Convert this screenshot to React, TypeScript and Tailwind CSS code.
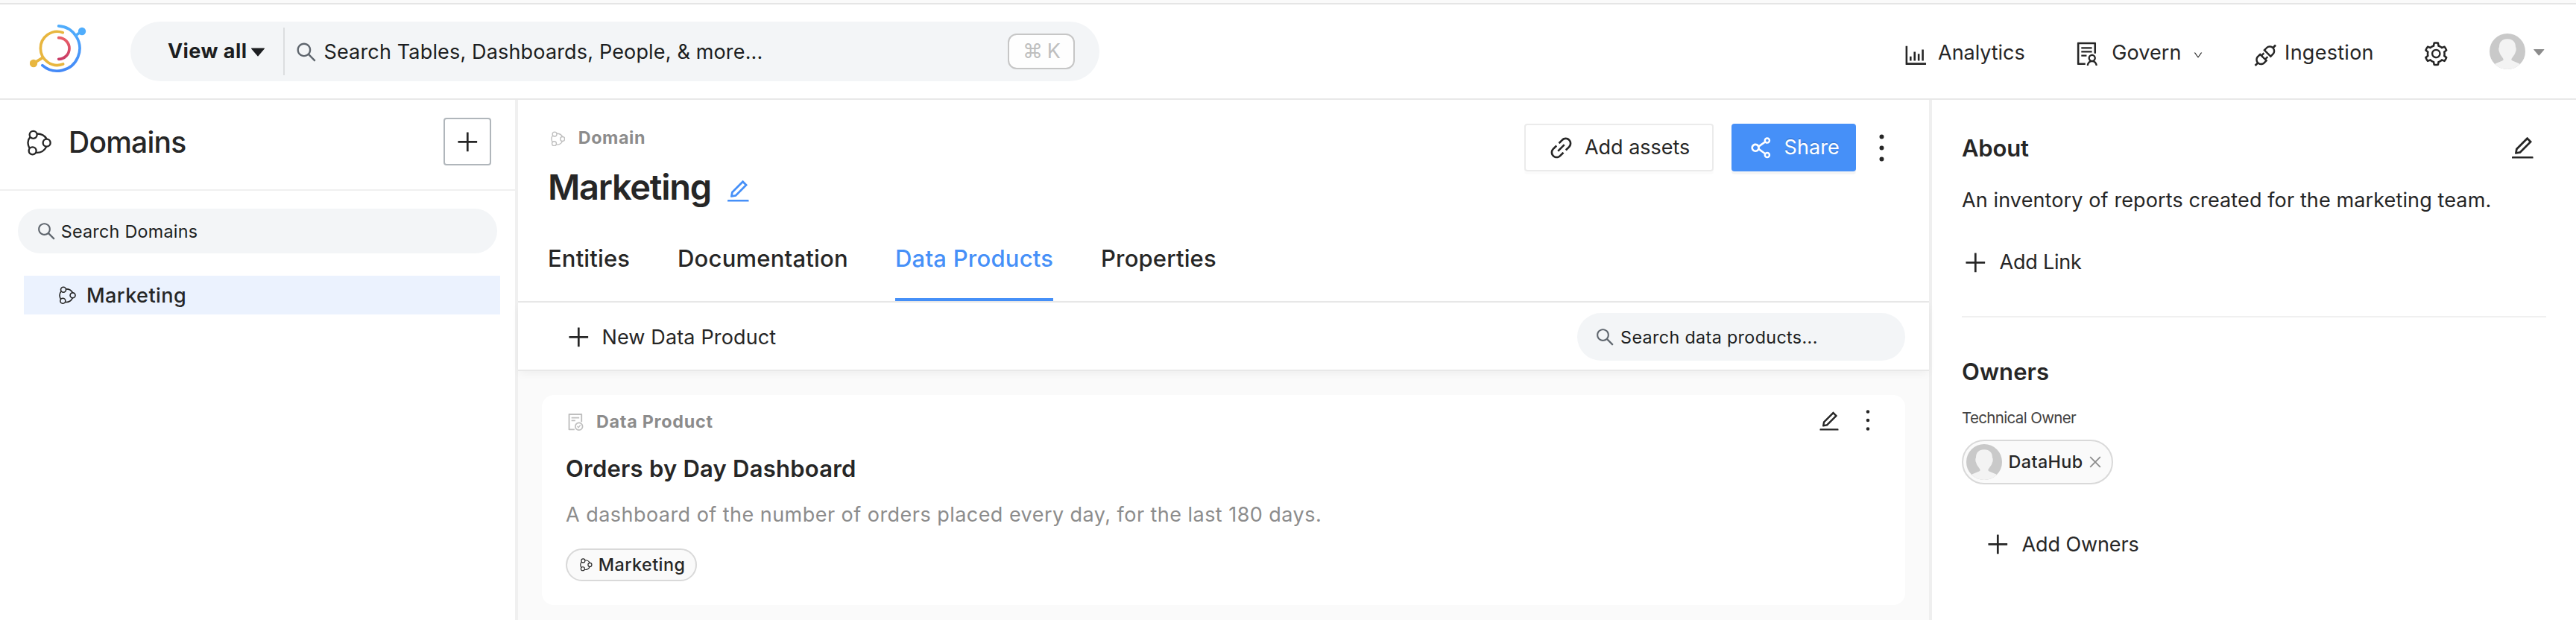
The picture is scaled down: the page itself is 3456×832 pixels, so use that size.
import React from "react";
import {
  AiFillCaretDown,
  AiOutlineApi,
  AiOutlineBarChart,
  AiOutlineClose,
  AiOutlineDown,
  AiOutlineEdit,
  AiOutlineFileDone,
  AiOutlineLink,
  AiOutlineMore,
  AiOutlinePlus,
  AiOutlineSearch,
  AiOutlineSetting,
  AiOutlineShareAlt,
  AiOutlineSolution,
} from "react-icons/ai";

function Logo() {
  return (
    <svg viewBox="60 36 228 198" className="h-[66px] w-[76px] shrink-0" fill="none" strokeWidth="11" strokeLinecap="round">
      <defs>
        <linearGradient id="logo-blue" x1="0" y1="0" x2="0" y2="1">
          <stop offset="0" stopColor="#50adfc" />
          <stop offset="1" stopColor="#4489f7" />
        </linearGradient>
        <linearGradient id="logo-red" x1="0" y1="0" x2="0" y2="1">
          <stop offset="0" stopColor="#ea6068" />
          <stop offset="1" stopColor="#c93c66" />
        </linearGradient>
      </defs>
      <path d="M176 44.6A90.5 90.5 0 1 1 110.5 203" stroke="url(#logo-blue)" />
      <path d="M247 81L268 67" stroke="#50adfc" />
      <circle cx="270" cy="66" r="15.5" fill="#50adfc" />
      <path d="M193 71A67.5 67.5 0 1 0 194 198M78 193L112 172" stroke="#e8b63f" />
      <circle cx="75" cy="195" r="15.5" fill="#e8b63f" />
      <path d="M176 92A43 43 0 0 1 176 178" stroke="url(#logo-red)" />
    </svg>
  );
}

function DomainIcon({ className }: { className: string }) {
  return (
    <svg viewBox="47 463 100 105" className={className} fill="none" stroke="currentColor" strokeWidth="7">
      <circle cx="73" cy="483.5" r="15" />
      <circle cx="127" cy="516" r="15" />
      <circle cx="70" cy="548" r="15" />
      <path d="M88 479.5C105 479 119 487 127 500.5M85 555.5C103 557 119 547 126 531.5M60 493C50 505 49 521 57.5 537.5" />
    </svg>
  );
}

function Avatar() {
  return (
    <svg viewBox="0 0 144 144" className="size-12 shrink-0">
      <clipPath id="avatar-clip">
        <circle cx="72" cy="72" r="72" />
      </clipPath>
      <g clipPath="url(#avatar-clip)">
        <rect width="144" height="144" fill="#c9c9c9" />
        <path
          d="M72 22C94 22 105 35 105 54C108 58 108 68 104 76C100 90 88 98 88 106C92 112 112 116 124 124L144 150H0L20 124C32 116 52 112 56 106C56 98 44 90 40 76C36 68 36 58 39 54C39 35 50 22 72 22Z"
          fill="#f3f3f3"
        />
      </g>
    </svg>
  );
}

function Header() {
  return (
    <header className="flex h-32 shrink-0 items-center justify-between border-b-2 border-[#e8e8e8] pl-10 pr-[39px]">
      <div className="flex items-center">
        <div className="-mt-2"><Logo /></div>
        <div className="ml-[59px] flex h-20 w-[1300px] items-center rounded-full bg-[#f3f5f7] pl-[50px] pr-[33px] text-[#1c1e21]">
          <span className="mt-px text-[27px] font-bold tracking-[0.45px]">View all</span>
          <AiFillCaretDown className="ml-0.5 mt-0.5 text-[26px]" />
          <div className="ml-[21px] h-16 w-0.5 bg-[#dcdee0]" />
          <AiOutlineSearch className="ml-[13px] mt-0.5 text-[32px] text-[#5f666e]" />
          <span className="ml-[7px] mt-[3px] grow text-[27px] tracking-[0.16px]">Search Tables, Dashboards, People, &amp; more...</span>
          <kbd className="flex h-12 w-[90px] items-center justify-center rounded-xl border-2 border-[#c6c6c6] bg-[#fefefe] pt-px font-['Inter',sans-serif] text-[27px] tracking-[-1px] text-[#bfbfbf]">
            ⌘ K
          </kbd>
        </div>
      </div>
      <div className="flex items-center">
        <nav className="mt-[5px] flex items-center gap-[65px] text-[27px]">
          <a className="flex items-center gap-[11px]">
            <AiOutlineBarChart className="mt-1.5 text-[36.6px]" />
            <span className="tracking-[-0.06px]">Analytics</span>
          </a>
          <a className="flex items-center">
            <AiOutlineSolution className="mt-0.5 text-[36.6px]" />
            <span className="ml-[15px] tracking-[0.1px]">Govern</span>
            <AiOutlineDown className="ml-[15px] mt-[5px] text-[14px]" />
          </a>
          <a className="flex items-center gap-2">
            <AiOutlineApi className="mt-1.5 text-[36.6px]" />
            <span className="tracking-[0.27px]">Ingestion</span>
          </a>
          <AiOutlineSetting className="mt-0.5 text-[36.6px]" />
        </nav>
        <div className="ml-[54px] flex items-center gap-2">
          <Avatar />
          <AiFillCaretDown className="mt-0.5 text-[20.6px] text-[#8c8c8c]" />
        </div>
      </div>
    </header>
  );
}

function Sidebar() {
  return (
    <aside className="w-[695px] shrink-0 border-r-4 border-[#f0f0f0]">
      <div className="flex h-[122px] items-center border-b-2 border-[#f0f0f0] pb-2 pl-[35.7px] pr-8">
        <DomainIcon className="mt-[3px] h-[35px] w-[33.3px]" />
        <h1 className="ml-[23px] mt-0.5 grow text-[39px] font-medium tracking-[-0.75px]">Domains</h1>
        <button className="flex size-16 items-center justify-center rounded-[4px] border-2 border-[#b0b6bb]">
          <AiOutlinePlus className="text-[36.6px]" />
        </button>
      </div>
      <div className="ml-6 mt-6 flex h-[60px] w-[643px] items-center rounded-full bg-[#f3f5f7] pl-[23.6px]">
        <AiOutlineSearch className="text-[28.6px] text-[#5f666e]" />
        <span className="ml-[5.5px] mt-0.5 text-[23.3px] tracking-[0.27px] text-[#1c1e21]">Search Domains</span>
      </div>
      <div className="ml-8 mt-[30px] flex h-[52px] w-[639px] items-center bg-[#ebf2fe] pl-[46.8px]">
        <DomainIcon className="h-[24.4px] w-[23.2px]" />
        <span className="ml-3.5 mt-0.5 text-[27px] font-medium tracking-[0.45px]">Marketing</span>
      </div>
    </aside>
  );
}

function ProductCard() {
  return (
    <article className="ml-8 mt-8 flex h-[282px] w-[1829px] justify-between rounded-2xl bg-white pl-8 pr-[29px] pt-[22px]">
      <div>
        <div className="flex h-7 items-center">
          <AiOutlineFileDone className="text-[27px] text-[#bfbfbf]" />
          <span className="ml-[14px] text-[23.3px] font-bold tracking-[0.74px] text-[#8c8c8c]">Data Product</span>
        </div>
        <h3 className="mt-[29px] text-[31px] font-semibold leading-10 tracking-[0.23px]">Orders by Day Dashboard</h3>
        <p className="mt-6 text-[27px] leading-9 tracking-[0.46px] text-[#8c8c8c]">
          A dashboard of the number of orders placed every day, for the last 180 days.
        </p>
        <div className="mt-[27px] flex h-11 w-[176px] items-center rounded-full border-2 border-[#d9d9d9] bg-[#fafafa] pl-[17px]">
          <DomainIcon className="h-[17.6px] w-[16.8px]" />
          <span className="ml-2 text-[23.3px] font-medium tracking-[0.47px]">Marketing</span>
        </div>
      </div>
      <div className="-mt-[9px] flex h-[42px] items-center gap-[15px]">
        <AiOutlineEdit className="mt-0.5 text-[32px]" />
        <AiOutlineMore className="text-[42px]" />
      </div>
    </article>
  );
}

function Main() {
  return (
    <main className="flex w-[1897px] shrink-0 flex-col border-r-4 border-[#efefef]">
      <div className="flex h-[272px] shrink-0 flex-col border-b-2 border-[#e8e8e8] pl-10">
        <div className="flex h-[193px] justify-between pr-9">
          <div className="pt-[37px]">
            <div className="flex h-7 items-center">
              <DomainIcon className="ml-[3.6px] mt-0.5 h-[20.6px] w-[19.6px] text-[#bfbfbf]" />
              <span className="ml-[17.5px] mt-px text-[23.3px] font-bold tracking-[0.62px] text-[#8c8c8c]">Domain</span>
            </div>
            <div className="mt-6 flex h-14 items-center">
              <h2 className="text-[47px] font-semibold leading-[56px] tracking-[-1.28px]">Marketing</h2>
              <AiOutlineEdit className="ml-[18px] mt-[11px] text-[36.6px] text-[#4690f8]" />
            </div>
          </div>
          <div className="mt-8 flex h-16 items-center">
            <button className="flex h-16 w-[254px] items-center rounded-[4px] border-2 border-[#ebebeb] pl-[28.5px] shadow-[0_4px_0_rgba(0,0,0,0.016)]">
              <AiOutlineLink className="text-[37px]" />
              <span className="ml-[13.5px] mt-px text-[27px] tracking-[-0.03px]">Add assets</span>
            </button>
            <button className="ml-6 flex h-16 w-[167px] items-center rounded-[4px] bg-[#4690f8] pl-[20.5px] text-white shadow-[0_4px_0_rgba(0,0,0,0.04)]">
              <AiOutlineShareAlt className="text-[36.6px]" />
              <span className="ml-[13.5px] mt-px text-[27px] tracking-[0.08px] [text-shadow:0_-2px_0_rgba(0,0,0,0.12)]">Share</span>
            </button>
            <AiOutlineMore className="ml-[7px] text-[55px]" />
          </div>
        </div>
        <div className="flex h-[77px] gap-16 text-[31px] font-medium leading-10">
          <span className="w-[110px] tracking-[0.15px]">Entities</span>
          <span className="w-[228px] tracking-[0.22px]">Documentation</span>
          <span className="w-[212px] whitespace-nowrap border-b-4 border-[#4690f8] tracking-[0.23px] text-[#4690f8]">
            Data Products
          </span>
          <span className="tracking-[0.17px]">Properties</span>
        </div>
      </div>
      <div className="z-10 flex h-[92px] shrink-0 items-center border-b-2 border-[#e8e8e8] bg-white pl-[63px] pr-8 pt-0.5 shadow-[0_4px_12px_-2px_rgba(0,0,0,0.06)]">
        <AiOutlinePlus className="text-[36.6px]" />
        <span className="ml-[12.8px] mt-0.5 grow text-[27px] tracking-[0.15px]">New Data Product</span>
        <div className="flex h-16 w-[440px] items-center rounded-full bg-[#f3f5f7] pl-[23px]">
          <AiOutlineSearch className="text-[28.6px] text-[#5f666e]" />
          <span className="ml-[6.5px] mt-0.5 text-[23.3px] tracking-[0.36px] text-[#1c1e21]">Search data products...</span>
        </div>
      </div>
      <div className="grow bg-[#fafafa]">
        <ProductCard />
      </div>
    </main>
  );
}

function Details() {
  return (
    <aside className="grow px-10 pt-[45px]">
      <div className="flex h-10 items-center justify-between pr-[13px]">
        <h2 className="text-[31px] font-semibold tracking-[-0.19px]">About</h2>
        <AiOutlineEdit className="-mt-0.5 text-[36.6px]" />
      </div>
      <p className="mt-8 text-[27px] leading-9 tracking-[0.12px]">An inventory of reports created for the marketing team.</p>
      <div className="mt-[47px] flex h-9 items-center gap-3.5 text-[27px]">
        <AiOutlinePlus className="text-[36.6px]" />
        <span className="mt-px tracking-[-0.22px]">Add Link</span>
      </div>
      <div className="mt-[54px] h-0.5 bg-[#f0f0f0]" />
      <h2 className="mt-[53px] text-[31px] font-semibold leading-10 tracking-[0.11px]">Owners</h2>
      <div className="mt-7 text-[20.5px] leading-7 tracking-[-0.65px] text-[#434343]">Technical Owner</div>
      <div className="mt-[15px] flex h-[60px] w-[203px] items-center rounded-full border-2 border-[#d9d9d9] bg-[#fafafa] pl-[3.5px]">
        <Avatar />
        <span className="ml-[9px] text-[23.3px] font-medium tracking-[0.44px]">DataHub</span>
        <AiOutlineClose className="ml-[5px] text-[22px] text-[#8c8c8c]" />
      </div>
      <div className="ml-[30px] mt-[62px] flex h-9 items-center gap-3.5 text-[27px]">
        <AiOutlinePlus className="text-[36.6px]" />
        <span className="mt-0.5 tracking-[-0.1px]">Add Owners</span>
      </div>
    </aside>
  );
}

export default function App() {
  return (
    <div className="flex h-[832px] w-[3456px] flex-col overflow-hidden bg-white font-['Inter',sans-serif] text-[#262626]">
      <div className="h-1.5 shrink-0 border-b-2 border-[#e5e5e5] bg-[#fafafa]" />
      <Header />
      <div className="flex min-h-0 grow">
        <Sidebar />
        <Main />
        <Details />
      </div>
    </div>
  );
}
